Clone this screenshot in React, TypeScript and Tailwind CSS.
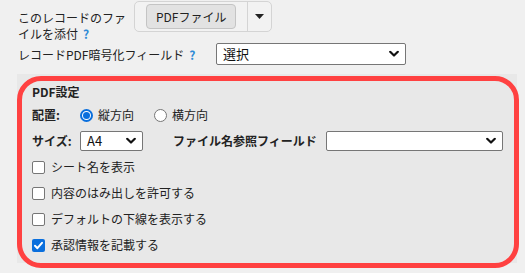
import React from "react";

const font = { fontFamily: '"Noto Sans CJK JP", "Noto Sans", sans-serif' };

function Help() {
  return <span className="inline-block align-baseline text-[#2e8bd6] font-bold text-[12px] leading-[14px] ml-[5px]">?</span>;
}

function Chevron() {
  return (
    <svg width="10" height="7" viewBox="0 0 10 7" className="absolute right-[6px] top-1/2 -translate-y-1/2">
      <path d="M1.2 1.3 L5 5 L8.8 1.3" fill="none" stroke="#111" strokeWidth="2.2" strokeLinecap="round" strokeLinejoin="round" />
    </svg>
  );
}

function Select({ w, h, text }: { w: string; h: string; text?: string }) {
  return (
    <div className={`relative ${w} ${h} shrink-0 bg-white border border-[#767676] rounded-[2px] flex items-center pl-[6px] text-[13px] text-[#111]`}>
      {text}
      <Chevron />
    </div>
  );
}

function Check({ label, checked }: { label: string; checked?: boolean }) {
  return (
    <div className="flex items-center h-[26px]">
      {checked ? (
        <div className="w-[13px] h-[13px] rounded-[2px] bg-[#0a6fdd] flex items-center justify-center">
          <svg width="11" height="11" viewBox="0 0 11 11">
            <path d="M2 5.8 L4.4 8.2 L9 2.8" fill="none" stroke="white" strokeWidth="2" strokeLinecap="round" strokeLinejoin="round" />
          </svg>
        </div>
      ) : (
        <div className="w-[13px] h-[13px] rounded-[2px] bg-white border border-[#767676]" />
      )}
      <span className="ml-[6px] text-[12px] text-[#222]">{label}</span>
    </div>
  );
}

function Radio({ label, checked }: { label: string; checked?: boolean }) {
  return (
    <div className="flex items-center">
      {checked ? (
        <div className="w-[13px] h-[13px] rounded-full border-[2px] border-[#0a6fdd] bg-white flex items-center justify-center">
          <div className="w-[7px] h-[7px] rounded-full bg-[#0a6fdd]" />
        </div>
      ) : (
        <div className="w-[13px] h-[13px] rounded-full border border-[#767676] bg-white" />
      )}
      <span className="ml-[5px] text-[12px] text-[#222]">{label}</span>
    </div>
  );
}

export default function App() {
  return (
    <div className="relative w-[525px] h-[273px] bg-[#f0f0f0] overflow-hidden text-[#222]" style={font}>
      <div className="flex items-start pl-[18px] pt-[1px] h-[41px]">
        <div className="w-[116px] text-[12px] leading-[16px] pt-[9px]">
          <div>このレコードのファ</div>
          <div>
            イルを添付<Help />
          </div>
        </div>
        <div className="flex items-center h-[31px] border border-[#d4d4d4] rounded-[5px] bg-[#f2f2f2]">
          <div className="ml-[11px] h-[25px] px-[9px] flex items-center bg-[#e2e2e2] border border-[#c4c4c4] rounded-[4px] text-[12px] text-[#222]">
            PDFファイル
          </div>
          <div className="ml-[11px] h-full border-l border-[#d4d4d4] w-[24px] flex items-center justify-center">
            <svg width="9" height="5" viewBox="0 0 9 5">
              <path d="M0 0 L9 0 L4.5 5 Z" fill="#222" />
            </svg>
          </div>
        </div>
      </div>
      <div className="flex items-center pl-[18px] mt-[2px]">
        <div className="w-[198px] text-[12px] leading-[15px]">
          レコードPDF暗号化フィールド<Help />
        </div>
        <Select w="w-[190px]" h="h-[22px]" text="選択" />
      </div>

      <div className="ml-[17px] mt-[9px] w-[500px] h-[189px] bg-[#e8e8e8] pl-[15px] pt-[9px]">
        <div className="text-[12px] font-bold leading-[18px]">PDF設定</div>
        <div className="flex items-center mt-[4px] h-[20px]">
          <span className="w-[48px] text-[12px] font-bold">配置:</span>
          <Radio label="縦方向" checked />
          <div className="w-[20px]" />
          <Radio label="横方向" />
        </div>
        <div className="flex items-center mt-[6px] h-[20px]">
          <span className="w-[48px] text-[12px] font-bold">サイズ:</span>
          <Select w="w-[63px]" h="h-[20px]" text="A4" />
          <span className="ml-[30px] w-[153px] text-[12px] font-bold whitespace-nowrap">ファイル名参照フィールド</span>
          <Select w="w-[177px]" h="h-[20px]" />
        </div>
        <div className="mt-[3px]">
          <Check label="シート名を表示" />
          <Check label="内容のはみ出しを許可する" />
          <Check label="デフォルトの下線を表示する" />
          <Check label="承認情報を記載する" checked />
        </div>
      </div>

      <div className="absolute left-[17px] top-[76px] w-[502px] h-[192px] border-[5px] border-[#ff4141] rounded-[24px] pointer-events-none" />
    </div>
  );
}
